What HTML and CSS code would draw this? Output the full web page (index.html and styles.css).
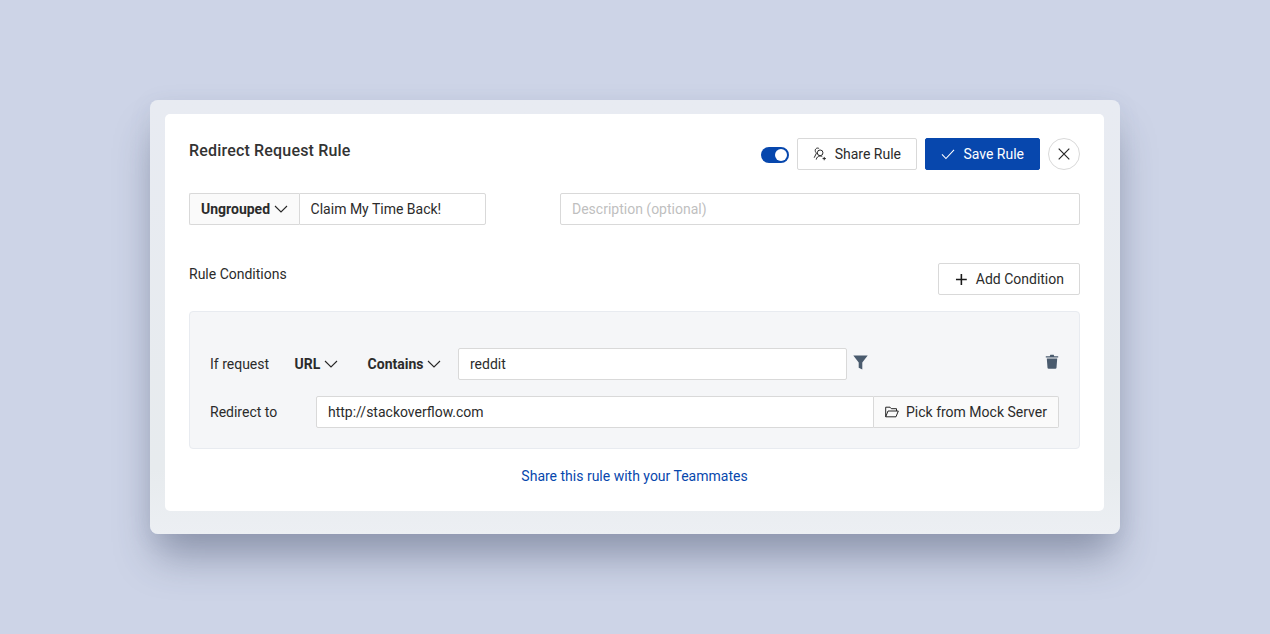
FILE: index.html
```html
<!DOCTYPE html>
<html lang="en">
<head>
<meta charset="utf-8">
<title>Redirect Request Rule</title>
<link rel="stylesheet" href="styles.css">
</head>
<body>
<div class="frame">
  <main class="card">
    <header class="head">
      <h1 class="title">Redirect Request Rule</h1>
      <div class="actions">
        <span class="switch"><span class="knob"></span></span>
        <button class="btn share-btn">
          <svg class="ico" width="14" height="14" viewBox="0 0 14 14" fill="none" stroke="#262626" stroke-width="1"><circle cx="7.300" cy="5.800" r="2.900"/><path d="M6.300 1.600C5.600 .8 4.300 .7 3.400 1.300 2.300 2 2 3.300 2.500 4.600 2.700 5.100 3.200 5.600 3.600 6L1.200 10.800"/><path d="M3.300 12.700C3.600 10.500 5.300 9 7.300 9 8.100 9 8.900 9.200 9.500 9.700"/><path d="M11.500 10v3.400M9.800 11.700h3.400"/></svg>
          Share Rule
        </button>
        <button class="btn save-btn">
          <svg class="ico" width="14" height="14" viewBox="0 0 14 14" fill="none" stroke="#fff" stroke-width="1.100"><path d="M1 7.500 5 11.600 13.200 2.800"/></svg>
          Save Rule
        </button>
        <button class="close" aria-label="Close">
          <svg width="12" height="12" viewBox="0 0 12 12" fill="none" stroke="#262626" stroke-width="1.200"><path d="M.7.7l10.600 10.600M11.300.7.700 11.300"/></svg>
        </button>
      </div>
    </header>

    <section class="meta">
      <div class="group name-group">
        <span class="addon group-addon"><b>Ungrouped</b>
          <svg class="chev" width="14" height="8" viewBox="0 0 14 8" fill="none" stroke="#262626" stroke-width="1.100"><path d="M1 1l6 6 6-6"/></svg>
        </span>
        <span class="field name-field">Claim My Time Back!</span>
      </div>
      <span class="field desc-field placeholder">Description (optional)</span>
    </section>

    <section class="cond-head">
      <h2 class="cond-title">Rule Conditions</h2>
      <button class="btn add-btn">
        <svg class="ico" width="14" height="14" viewBox="0 0 14 14" fill="none" stroke="#1a1a1a" stroke-width="1.600"><path d="M7.500 2v11M2 7.500h11"/></svg>
        Add Condition
      </button>
    </section>

    <section class="rule">
      <div class="row">
        <span class="label if-label">If request</span>
        <span class="select url-select"><b>URL</b>
          <svg class="chev" width="14" height="8" viewBox="0 0 14 8" fill="none" stroke="#262626" stroke-width="1.100"><path d="M1 1l6 6 6-6"/></svg>
        </span>
        <span class="select op-select"><b>Contains</b>
          <svg class="chev" width="14" height="8" viewBox="0 0 14 8" fill="none" stroke="#262626" stroke-width="1.100"><path d="M1 1l6 6 6-6"/></svg>
        </span>
        <span class="field value-field">reddit</span>
        <svg class="filter" width="15" height="15" viewBox="0 0 15 15" fill="#4a5b6e"><path d="M.3.500h14.400L9.300 7.500v7l-3.600-1.800V7.500z"/></svg>
        <svg class="trash" width="14" height="15" viewBox="0 0 14 15" fill="#4a5b6e"><path d="M.8 2.200h4L5.300.8h3.400l.5 1.400h4v1.400H.8z"/><path d="M1.800 4.400h10.400l-.7 9.300a1.200 1.200 0 0 1-1.200 1.100H3.700a1.200 1.200 0 0 1-1.200-1.100z"/></svg>
      </div>
      <div class="row">
        <span class="label to-label">Redirect to</span>
        <div class="group target-group">
          <span class="field target-field">http://stackoverflow.com</span>
          <span class="addon mock-addon">
            <svg class="ico" width="14" height="12" viewBox="0 0 14 12" fill="none" stroke="#262626" stroke-width="1"><path d="M.7 10.800V1.200h4.300l1.300 1.500h5.200v2.300"/><path d="M.7 10.800 3 5h10.300l-2.300 5.800z"/></svg>
            Pick from Mock Server
          </span>
        </div>
      </div>
    </section>

    <a class="team-link" href="#">Share this rule with your Teammates</a>
  </main>
</div>
</body>
</html>
```
FILE: styles.css
```css
* { box-sizing: border-box; }
html, body { height: 100%; }
body {
  margin: 0;
  background: #cdd4e7;
  font-family: Roboto, "Liberation Sans", sans-serif;
  font-size: 14px;
  line-height: 20px;
  color: #2b2b2b;
  display: flex;
  align-items: center;
  justify-content: center;
  overflow: hidden;
}
.frame {
  width: 970px;
  height: 434px;
  padding: 14px 16px 23px 15px;
  border-radius: 8px;
  background: linear-gradient(180deg, #e8ebf2 0%, #e7ebee 85%, #eceff3 100%);
  box-shadow: 0 28px 40px -6px rgba(50, 60, 90, .4), 0 4px 24px rgba(90, 100, 130, .08);
}
.card {
  height: 397px;
  padding: 24px;
  background: #fff;
  border-radius: 5px;
  display: flex;
  flex-direction: column;
}
.head { display: flex; justify-content: space-between; align-items: flex-start; height: 32px; }
.title { margin: 0; font-size: 16px; font-weight: 500; line-height: 26px; letter-spacing: .18px; color: #333; }
.actions { display: flex; align-items: center; gap: 8px; }
.switch {
  width: 28px; height: 16px; margin-top: 2px; border-radius: 8px; background: #0747ad;
  display: flex; align-items: center; justify-content: flex-end; padding-right: 2px;
}
.knob { width: 12px; height: 12px; border-radius: 50%; background: #fff; }
.btn {
  height: 32px;
  padding: 0 15px;
  border: 1px solid #d9d9d9;
  border-radius: 2px;
  background: #fff;
  font: inherit;
  white-space: nowrap;
  color: #2b2b2b;
  display: inline-flex;
  align-items: center;
  justify-content: flex-start;
  gap: 8px;
}
.share-btn { width: 120px; }
.save-btn { width: 115px; gap: 8.600px; background: #0747ad; border-color: #0747ad; color: #fff; }
.close {
  width: 32px; height: 32px; padding: 0; border: 1px solid #d9d9d9; border-radius: 50%;
  background: #fff; display: flex; align-items: center; justify-content: center;
}
.meta { display: flex; justify-content: space-between; margin-top: 23px; }
.group { display: flex; height: 32px; }
.field {
  height: 32px;
  padding: 5px 11px;
  border: 1px solid #d9d9d9;
  border-radius: 2px;
  background: #fff;
  color: #2b2b2b;
}
.addon {
  height: 32px;
  border: 1px solid #d9d9d9;
  background: #fafafa;
  display: flex;
  align-items: center;
  color: #2b2b2b;
  white-space: nowrap;
}
.name-group { width: 297px; }
.group-addon { width: 110px; padding-left: 11px; gap: 4px; border-radius: 2px 0 0 2px; border-right: 0; }
.group-addon b, .select b { font-weight: 700; }
.name-field { flex: 1; padding-left: 10.600px; border-radius: 0 2px 2px 0; }
.desc-field { width: 520px; }
.placeholder { color: #bfbfbf; }
.cond-head { display: flex; justify-content: space-between; align-items: flex-start; margin-top: 38px; height: 32px; }
.cond-title { margin: 0; font-size: 14px; font-weight: 400; line-height: 22px; }
.add-btn { width: 142px; }
.rule {
  margin-top: 16px;
  height: 138px;
  padding: 36px 20px 20px;
  background: #f5f6f8;
  border: 1px solid #e8ebf0;
  border-radius: 4px;
  display: flex;
  flex-direction: column;
  gap: 16px;
}
.row { display: flex; align-items: center; height: 32px; }
.if-label { width: 84.600px; }
.to-label { width: 106px; }
.select { display: flex; align-items: center; gap: 4px; }
.url-select { width: 73px; }
.op-select { width: 90.400px; }
.value-field { width: 389px; }
.filter { margin-left: 6px; margin-top: -3px; }
.trash { margin-left: auto; margin-top: -5px; }
.target-group { flex: 1; }
.target-field { flex: 1; border-radius: 2px 0 0 2px; }
.mock-addon { width: 185px; padding-left: 11px; gap: 7px; border-left: 0; border-radius: 0 2px 2px 0; }
.team-link {
  margin-top: 17px;
  text-align: center;
  color: #0747ad;
  text-decoration: none;
}
```
